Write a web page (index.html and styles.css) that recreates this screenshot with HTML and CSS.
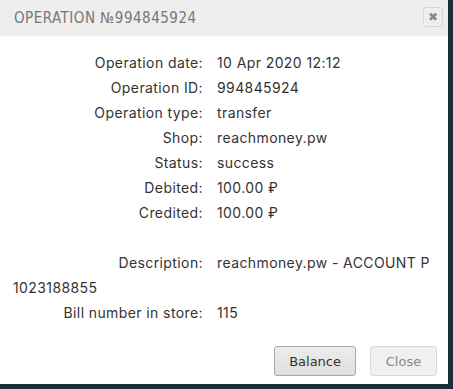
FILE: index.html
```html
<!DOCTYPE html>
<html lang="en">
<head>
  <meta charset="UTF-8" />
  <title>Operation №994845924</title>
  <link rel="stylesheet" href="styles.css">
</head>
<body>
  <div class="dialog">
    <div class="dialog-head">
      <span class="dialog-title">Operation №994845924</span>
      <button class="close-x" title="Close">&#10006;</button>
    </div>

    <div class="dialog-body">
      <div class="row"><span class="label">Operation date:</span>10 Apr 2020 12:12</div>
      <div class="row"><span class="label">Operation ID:</span>994845924</div>
      <div class="row"><span class="label">Operation type:</span>transfer</div>
      <div class="row"><span class="label">Shop:</span>reachmoney.pw</div>
      <div class="row"><span class="label">Status:</span>success</div>
      <div class="row"><span class="label">Debited:</span>100.00 &#8381;</div>
      <div class="row"><span class="label">Credited:</span>100.00 &#8381;</div>
      <div class="row empty"></div>
      <div class="row"><span class="label">Description:</span>reachmoney.pw - ACCOUNT P 1023188855</div>
      <div class="row"><span class="label">Bill number in store:</span>115</div>
    </div>

    <div class="dialog-foot">
      <button class="btn">Balance</button>
      <button class="btn btn-muted">Close</button>
    </div>
  </div>
</body>
</html>
```

FILE: styles.css
```css
html, body {
  margin: 0;
  padding: 0;
  background: #1f2e35;
}
.dialog {
  width: 448px;
  height: 384px;
  background: #fff;
  display: flex;
  flex-direction: column;
  font-family: Inter, "Open Sans", sans-serif;
  color: #333;
}
.dialog-head {
  height: 36px;
  background: #eeeeee;
  display: flex;
  align-items: center;
  justify-content: space-between;
  padding: 0 5px 0 14px;
}
.dialog-title {
  font-family: "DejaVu Sans Condensed", "DejaVu Sans", sans-serif;
  font-stretch: condensed;
  font-size: 15px;
  text-transform: uppercase;
  letter-spacing: 0.5px;
  color: #777;
}
.close-x {
  width: 20px;
  height: 20px;
  padding: 0;
  border: 1px solid #d6d6d6;
  border-radius: 3px;
  background: #eee;
  color: #888;
  font-size: 12px;
  font-weight: bold;
  line-height: 18px;
  font-family: "DejaVu Sans", sans-serif;
  margin-bottom: 2px;
}
.dialog-body {
  flex: 1;
  padding: 14px 13px 0 13px;
  font-size: 14px;
  letter-spacing: 0.4px;
}
.row {
  line-height: 25px;
}
.row.empty {
  height: 25px;
}
.label {
  display: inline-block;
  width: 190px;
  margin-right: 14px;
  text-align: right;
}
.dialog-foot {
  display: flex;
  justify-content: flex-end;
  gap: 14px;
  padding: 0 11px 8px 0;
}
.btn {
  height: 30px;
  min-width: 67px;
  padding: 0 14px;
  font-family: "DejaVu Sans", Verdana, sans-serif;
  font-size: 13px;
  color: #333;
  background: linear-gradient(#ececec, #dedede);
  border: 1px solid #a9a9a9;
  border-radius: 3px;
}
.btn-muted {
  color: #888;
  background: #f0f0f0;
  border-color: #d8d8d8;
}
```
